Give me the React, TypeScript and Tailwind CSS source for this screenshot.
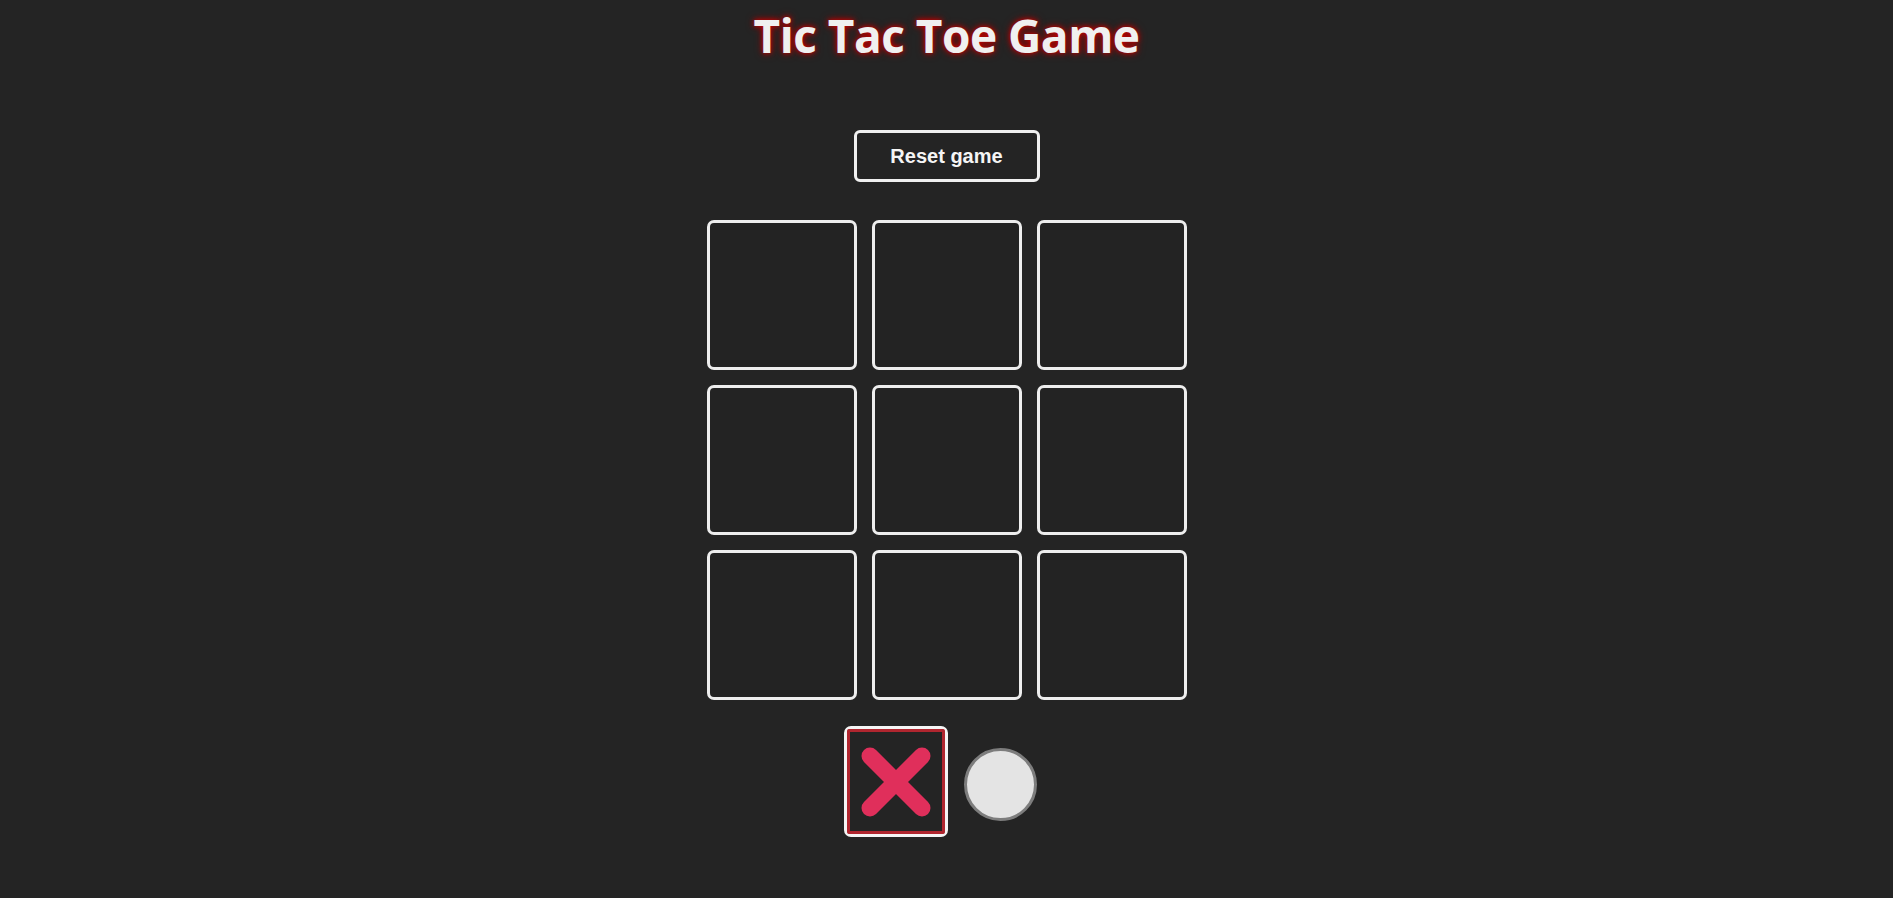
import React, { useState } from 'react';

type Mark = 'X' | 'O' | null;

const XMark: React.FC<{ size?: number }> = ({ size = 72 }) => (
  <svg width={size} height={size} viewBox="0 0 72 72">
    <path d="M10 10 L62 62 M62 10 L10 62" stroke="#e02f5b" strokeWidth="17" strokeLinecap="round" />
  </svg>
);

export default function App() {
  const [cells, setCells] = useState<Mark[]>(Array(9).fill(null));
  const [turn, setTurn] = useState<'X' | 'O'>('X');

  const play = (i: number) => {
    if (cells[i]) return;
    const next = [...cells];
    next[i] = turn;
    setCells(next);
    setTurn(turn === 'X' ? 'O' : 'X');
  };

  const reset = () => {
    setCells(Array(9).fill(null));
    setTurn('X');
  };

  return (
    <div className="min-h-screen w-full bg-[#242424] flex flex-col items-center" style={{ fontFamily: '"Liberation Sans", Arial, sans-serif' }}>
      <h1
        className="mt-[6px] text-[46px] leading-[58px] font-bold text-[#f0f0f0] tracking-[-0.5px]"
        style={{ fontFamily: '"Open Sans", "Noto Sans", sans-serif', textShadow: '0 0 5px #d00000, 0 0 8px #900000' }}
      >
        Tic Tac Toe Game
      </h1>

      <button
        onClick={reset}
        className="mt-[66px] w-[186px] h-[52px] rounded-[6px] border-[3px] border-[#f0f0f0] bg-transparent text-[#f5f5f5] text-[20px] font-bold"
      >
        Reset game
      </button>

      <div className="mt-[38px] grid grid-cols-[repeat(3,150px)] grid-rows-[repeat(3,150px)] gap-[15px]">
        {cells.map((c, i) => (
          <button
            key={i}
            onClick={() => play(i)}
            className="rounded-[7px] border-[3px] border-[#eeeeee] bg-[#232323] flex items-center justify-center"
          >
            {c === 'X' && <XMark size={80} />}
            {c === 'O' && <div className="w-[80px] h-[80px] rounded-full bg-[#e4e4e4] border-[3px] border-[#888]" />}
          </button>
        ))}
      </div>

      <div className="mt-[26px] flex items-center gap-[16px] pr-[13px]">
        <div className={`w-[104px] h-[111px] rounded-[7px] border-[3px] ${turn === 'X' ? 'border-[#f5f5f5]' : 'border-transparent'} flex`}>
          <div className="flex-1 border-[3px] border-[#b0262f] rounded-[2px] flex items-center justify-center">
            <XMark size={72} />
          </div>
        </div>
        <div className="mt-[6px] w-[73px] h-[73px] rounded-full bg-[#e4e4e4] border-[3px] border-[#7d7d7d]" />
      </div>
    </div>
  );
}
